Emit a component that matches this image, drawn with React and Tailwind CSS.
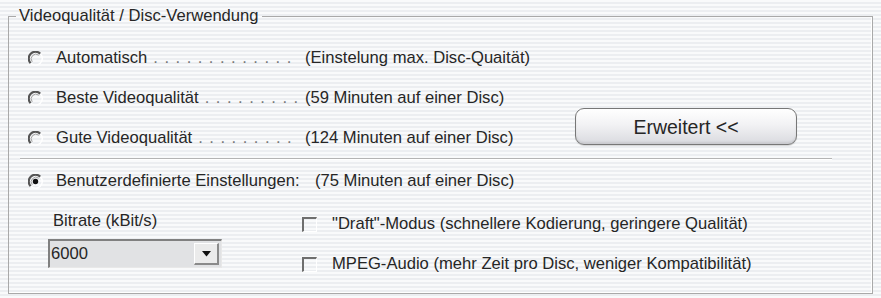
import React from "react";

function Radio({ checked }) {
  return (
    <svg width="15" height="15" viewBox="0 0 15 15" className="shrink-0">
      <path d="M12.3 2.7 A6.6 6.6 0 0 0 2.7 12.3" fill="none" stroke="#555555" strokeWidth="2.2" />
      <path d="M10.8 4.2 A4.7 4.7 0 0 0 4.2 10.8" fill="none" stroke="#a0a0a0" strokeWidth="1" />
      <path d="M2.7 12.3 A6.6 6.6 0 0 0 12.3 2.7" fill="none" stroke="#ffffff" strokeWidth="1.4" />
      {checked && <circle cx="7.5" cy="7.5" r="2.7" fill="#111" />}
    </svg>
  );
}

function Check() {
  return (
    <div className="w-[15px] h-[15px] shrink-0 border-t-2 border-l-2 border-t-[#6e6e6e] border-l-[#6e6e6e] border-r border-b border-r-white border-b-white" />
  );
}

const txt = "text-[#262626]";

function RadioRow({ label, note, dots }) {
  return (
    <div className="h-[24px] flex items-center">
      <Radio />
      <div className="ml-[13px] w-[246px] flex items-center">
        <span className={`shrink-0 whitespace-nowrap ${txt}`}>{label}</span>
        <span className="ml-[6px] whitespace-nowrap text-[#777] tracking-[6.5px]">{dots}</span>
      </div>
      <span className={`ml-[3px] whitespace-nowrap ${txt}`}>{note}</span>
    </div>
  );
}

export default function App() {
  return (
    <div
      className="w-[881px] h-[298px] overflow-hidden px-[8px] pt-[7px] text-[16.6px] leading-[18px] bg-[repeating-linear-gradient(to_bottom,#f9fafb_0px,#f9fafb_2px,#eceef1_2px,#eceef1_4px)]"
      style={{ fontFamily: '"Liberation Sans", Arial, sans-serif' }}
    >
      <fieldset className="border border-[#a9a9a9] h-[287px] w-[865px] p-0 m-0 shadow-[inset_-1px_-1px_0_#ffffff]">
        <legend className={`ml-[7px] px-[3px] ${txt}`}>Videoqualität / Disc-Verwendung</legend>
        <div className="flex">
          <div className="pl-[19px] pt-[21px] flex flex-col gap-[16px] w-[566px]">
            <RadioRow label="Automatisch" dots="............." note="(Einstelung max. Disc-Quaität)" />
            <RadioRow label="Beste Videoqualität" dots="........." note="(59 Minuten auf einer Disc)" />
            <RadioRow label="Gute Videoqualität" dots="........." note="(124 Minuten auf einer Disc)" />
          </div>
          <div className="pt-[83px]">
            <button className="w-[222px] h-[37px] rounded-[9px] border border-[#777] bg-[linear-gradient(to_bottom,#ffffff_0%,#f2f2f4_45%,#d9dadf_100%)] shadow-[inset_0_-2px_2px_rgba(0,0,0,0.08),0_1px_1px_rgba(0,0,0,0.15)] text-[#262626] text-[19.5px] flex items-center justify-center">
              Erweitert &lt;&lt;
            </button>
          </div>
        </div>
        <div className="ml-[11px] mt-[8px] w-[812px] h-[2px] border-t border-t-[#b4b4b4] border-b border-b-white" />
        <div className="pl-[19px] mt-[9px] h-[24px] flex items-center">
          <Radio checked />
          <span className={`ml-[13px] w-[259px] whitespace-nowrap ${txt}`}>Benutzerdefinierte Einstellungen:</span>
          <span className={`whitespace-nowrap ${txt}`}>(75 Minuten auf einer Disc)</span>
        </div>
        <div className="flex mt-[18px] ml-[39px]">
          <div className="w-[254px] flex flex-col">
            <div className={`h-[20px] flex items-center ml-[5px] ${txt}`}>Bitrate (kBit/s)</div>
            <div className="mt-[8px] w-[174px] h-[29px] flex items-stretch border-t-2 border-l-2 border-t-[#808080] border-l-[#808080] border-r border-b border-r-[#e8e8e8] border-b-[#e8e8e8] bg-[#e1e2e4]">
              <div className={`flex-1 flex items-center pl-[1px] ${txt}`}>6000</div>
              <div className="my-[2px] mr-[2px] w-[25px] flex items-center justify-center bg-[#ebebeb] border-t border-l border-t-white border-l-white border-r-2 border-b-2 border-r-[#8a8a8a] border-b-[#8a8a8a]">
                <svg width="9" height="6" viewBox="0 0 9 6"><path d="M0 0 H9 L4.5 5.5 Z" fill="#111" /></svg>
              </div>
            </div>
          </div>
          <div className="flex flex-col gap-[16px] pt-[1px]">
            <div className="h-[24px] flex items-center">
              <Check />
              <span className={`ml-[15px] whitespace-nowrap ${txt}`}>"Draft"-Modus (schnellere Kodierung, geringere Qualität)</span>
            </div>
            <div className="h-[24px] flex items-center">
              <Check />
              <span className={`ml-[15px] whitespace-nowrap ${txt}`}>MPEG-Audio (mehr Zeit pro Disc, weniger Kompatibilität)</span>
            </div>
          </div>
        </div>
      </fieldset>
    </div>
  );
}
